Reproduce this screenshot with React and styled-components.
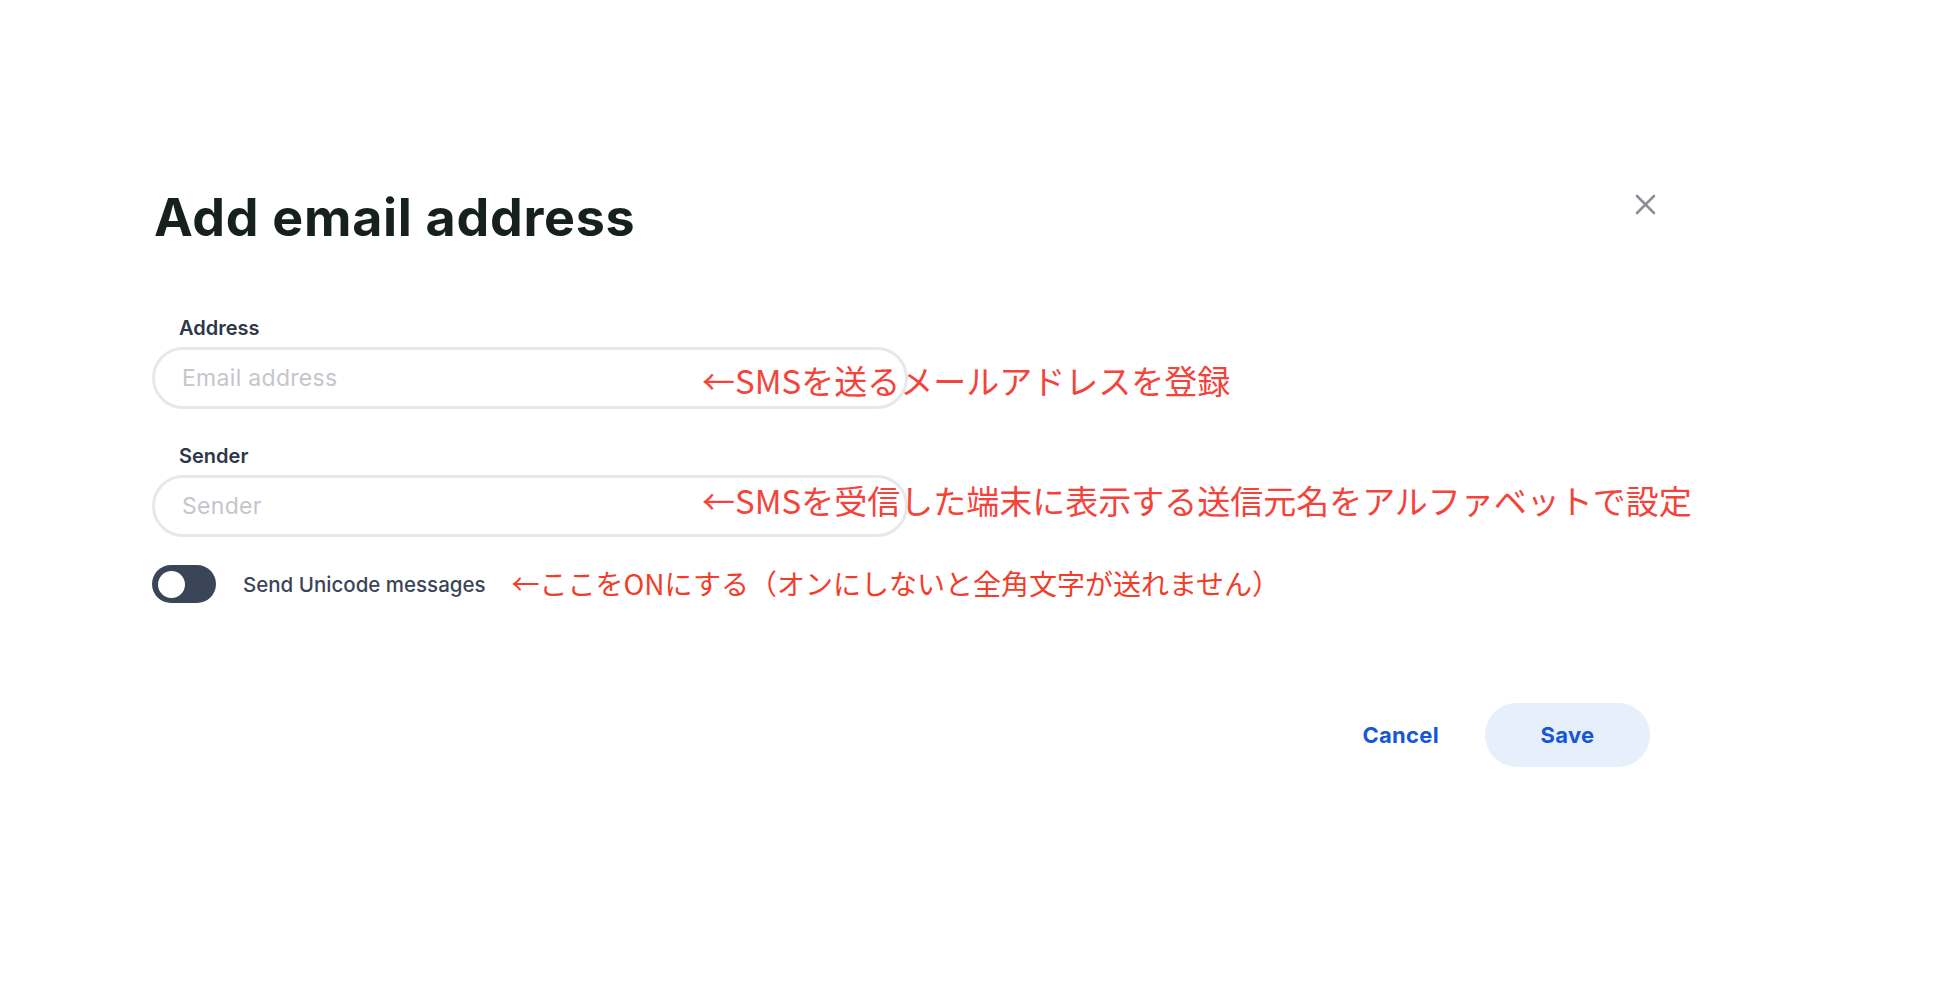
import React, { useState } from "react";
import styled, { createGlobalStyle } from "styled-components";

const GlobalStyle = createGlobalStyle`
   html, body {
      margin: 0;
      padding: 0;
      background: #ffffff;
   }
   body {
      font-family: Inter, "Noto Sans", "Noto Sans CJK JP", sans-serif;
      -webkit-font-smoothing: antialiased;
   }
`;

const Page = styled.div`
   min-height: 984px;
   padding: 187px 0 0 152px;
   box-sizing: border-box;
`;

const Modal = styled.div`
   width: 1507px;
   display: flex;
   flex-direction: column;
`;

const Header = styled.div`
   display: flex;
   justify-content: space-between;
   align-items: flex-start;
   padding: 0 3px 0 2px;
`;

const Title = styled.h1`
   margin: 0;
   font-size: 52px;
   line-height: 62px;
   font-weight: 700;
   color: #16201e;
   letter-spacing: 0.7px;
`;

const CloseButton = styled.button`
   border: none;
   background: none;
   padding: 0;
   margin-top: 7px;
   width: 21px;
   height: 21px;
   cursor: pointer;
   display: flex;
`;

const Form = styled.div`
   margin-top: 67px;
   display: flex;
   flex-direction: column;
`;

const Field = styled.div`
   display: flex;
   flex-direction: column;
   margin-bottom: ${props => props.gap || 0}px;
`;

const Label = styled.label`
   font-size: 20px;
   line-height: 24px;
   font-weight: 600;
   color: #2d3748;
   padding-left: 27px;
   margin-bottom: 7px;
`;

const InputWrap = styled.div`
   position: relative;
   width: 756px;
`;

const Input = styled.input`
   box-sizing: border-box;
   width: 756px;
   height: 62px;
   border: 3px solid #e8e8ea;
   border-radius: 31px;
   padding: 0 27px;
   font-family: Inter, "Noto Sans", sans-serif;
   font-size: 23px;
   letter-spacing: 0.3px;
   color: #2d3748;
   background: #fff;
   outline: none;

   &::placeholder {
      color: #c4c6cc;
   }
`;

const Note = styled.span`
   position: ${props => (props.inline ? "static" : "absolute")};
   left: 550px;
   top: 50%;
   transform: ${props => (props.inline ? "none" : `translateY(${props.shift || -44}%)`)};
   white-space: nowrap;
   font-family: "Noto Sans CJK JP", "Noto Sans", sans-serif;
   font-size: ${props => props.size || 33}px;
   line-height: 1.2;
   color: ${props => props.color || "#f4433b"};
   pointer-events: none;
`;

const ToggleRow = styled.div`
   margin-top: 28px;
   display: flex;
   align-items: center;
`;

const Toggle = styled.button`
   width: 64px;
   height: 38px;
   border-radius: 19px;
   border: none;
   padding: 0 6px;
   background: #3a4557;
   display: flex;
   align-items: center;
   justify-content: ${props => (props.on ? "flex-end" : "flex-start")};
   cursor: pointer;
`;

const Knob = styled.span`
   width: 27px;
   height: 27px;
   border-radius: 50%;
   background: #fff;
`;

const ToggleLabel = styled.span`
   margin-left: 27px;
   margin-right: 26px;
   font-size: 20.5px;
   font-weight: 500;
   color: #3a4557;
`;

const Footer = styled.div`
   margin-top: 100px;
   display: flex;
   justify-content: flex-end;
   align-items: center;
   padding-right: 9px;
`;

const TextButton = styled.button`
   border: none;
   background: ${props => (props.filled ? "#e7eefc" : "transparent")};
   height: 64px;
   min-width: ${props => (props.filled ? "165px" : "auto")};
   padding: 0 ${props => (props.filled ? 24 : 0)}px;
   margin-left: ${props => props.offset || 0}px;
   border-radius: 32px;
   font-family: Inter, "Noto Sans", sans-serif;
   font-size: 22px;
   font-weight: 700;
   letter-spacing: 0.3px;
   color: #1557d8;
   cursor: pointer;
`;

const CloseIcon = () => (
   <svg width="21" height="21" viewBox="0 0 21 21">
      <path
         d="M2 2 L19 19 M19 2 L2 19"
         stroke="#8c8f97"
         strokeWidth="2.6"
         strokeLinecap="round"
         fill="none"
      />
   </svg>
);

const App = () => {
   const [unicode, setUnicode] = useState(false);

   return (
      <Page>
         <GlobalStyle />
         <Modal>
            <Header>
               <Title>Add email address</Title>
               <CloseButton aria-label="Close">
                  <CloseIcon />
               </CloseButton>
            </Header>

            <Form>
               <Field gap={35}>
                  <Label>Address</Label>
                  <InputWrap>
                     <Input placeholder="Email address" />
                     <Note>←SMSを送るメールアドレスを登録</Note>
                  </InputWrap>
               </Field>

               <Field>
                  <Label>Sender</Label>
                  <InputWrap>
                     <Input placeholder="Sender" />
                     <Note shift={-64}>←SMSを受信した端末に表示する送信元名をアルファベットで設定</Note>
                  </InputWrap>
               </Field>

               <ToggleRow>
                  <Toggle on={unicode ? 1 : 0} onClick={() => setUnicode(!unicode)}>
                     <Knob />
                  </Toggle>
                  <ToggleLabel>Send Unicode messages</ToggleLabel>
                  <Note inline size={28} color="#f23d2a">
                     ←ここをONにする（オンにしないと全角文字が送れません）
                  </Note>
               </ToggleRow>
            </Form>

            <Footer>
               <TextButton>Cancel</TextButton>
               <TextButton filled offset={46}>Save</TextButton>
            </Footer>
         </Modal>
      </Page>
   );
};

export default App;
